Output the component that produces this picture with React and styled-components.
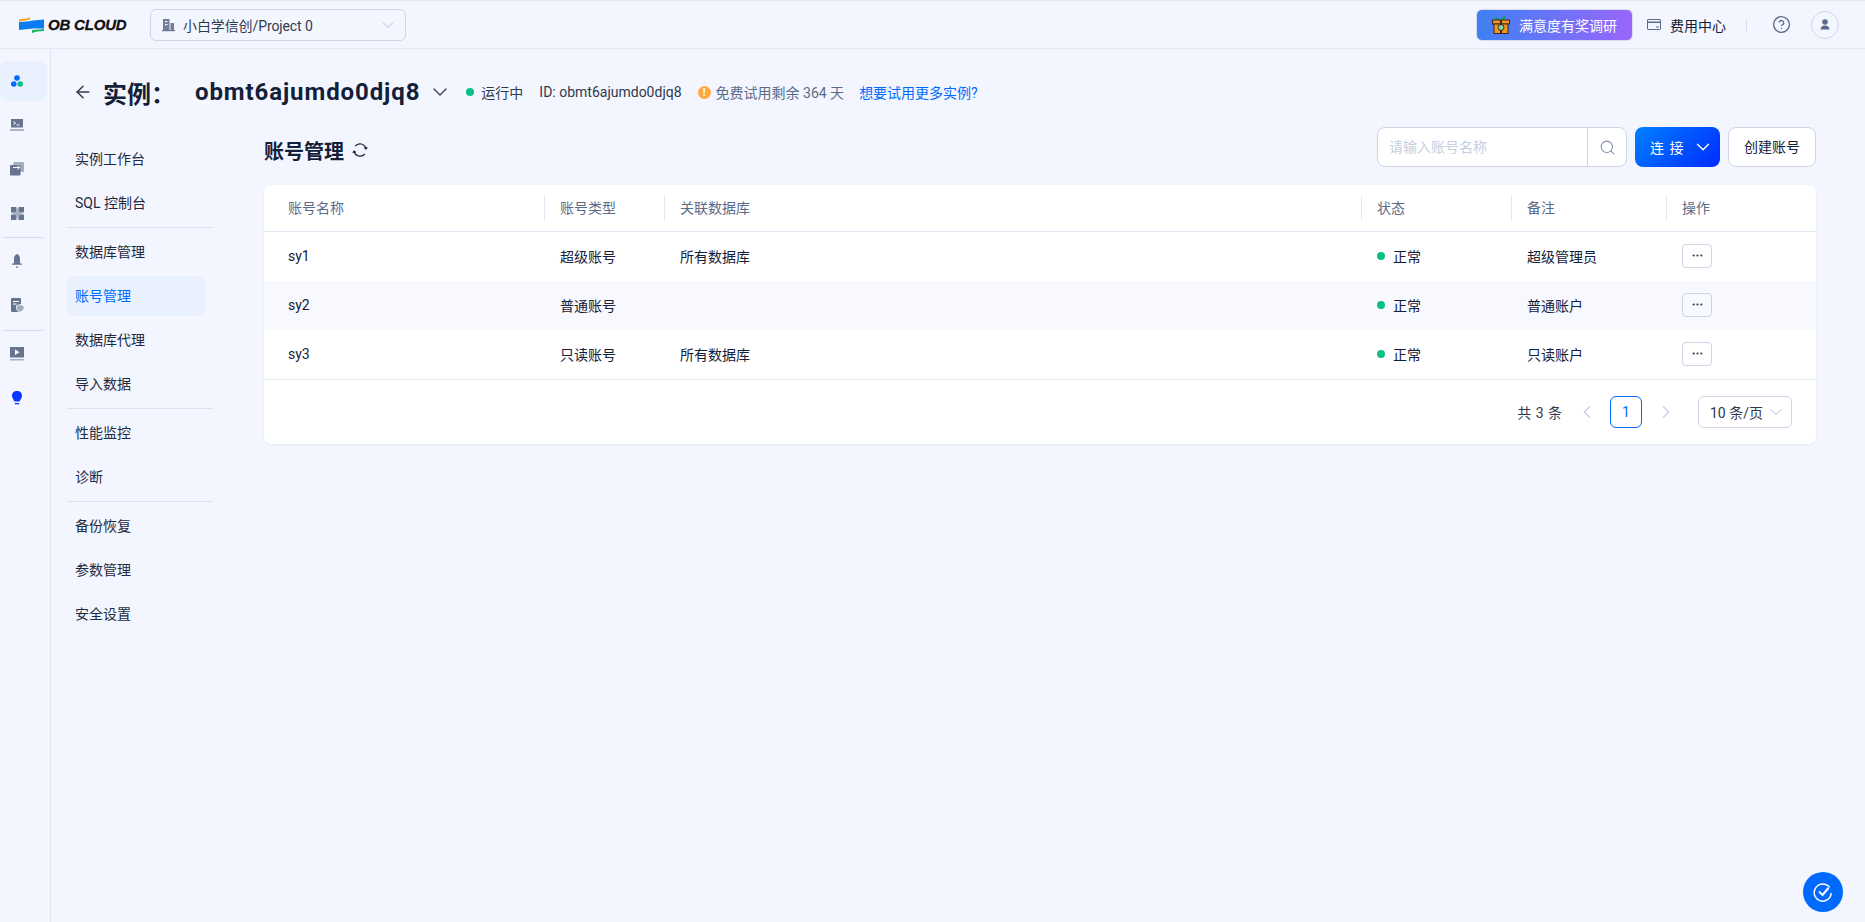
import React from 'react';
import styled, { createGlobalStyle } from 'styled-components';
import { ArrowLeft, ChevronDown, ChevronLeft, ChevronRight, CircleHelp, Ellipsis, Search } from 'lucide-react';

const GlobalStyle = createGlobalStyle`
    html, body {
        margin: 0;
        padding: 0;
        height: 100%;
        background: #f3f6fe;
        color: #132039;
        font-family: Roboto, "Noto Sans CJK SC", sans-serif;
        font-size: 14px;
        overflow: hidden;
    }
    * { box-sizing: border-box; }
`;

const Page = styled.div`
    width: 1865px;
    height: 922px;
    display: flex;
    flex-direction: column;
    position: relative;
    border-top: 1px solid #e6e7ec;
`;

const TopBar = styled.header`
    height: 48px;
    flex: none;
    display: flex;
    align-items: center;
    padding: 0 26px 0 19px;
    border-bottom: 1px solid #e2e7f3;
`;

const LogoWrap = styled.div`
    width: 131px;
    display: flex;
    align-items: center;
    gap: 4px;
`;

const LogoText = styled.span`
    font-family: "Liberation Sans", sans-serif;
    font-weight: 700;
    font-style: italic;
    font-size: 15px;
    letter-spacing: -0.2px;
    color: #111;
    white-space: nowrap;
    -webkit-text-stroke: 0.3px #111;
`;

const ProjectSelect = styled.div`
    width: 256px;
    height: 32px;
    display: flex;
    align-items: center;
    padding: 0 7px 0 11px;
    border: 1px solid #cdd5e4;
    border-radius: 6px;
    color: #303a4d;
    gap: 8px;
`;

const ProjectName = styled.span`
    flex: 1;
    white-space: nowrap;
    letter-spacing: -0.1px;
`;

const TopRight = styled.div`
    margin-left: auto;
    display: flex;
    align-items: center;
`;

const SurveyButton = styled.div`
    width: 157px;
    height: 32px;
    display: flex;
    align-items: center;
    padding-left: 15px;
    gap: 9px;
    border-radius: 6px;
    color: #fff;
    border: 1px solid #d8dcf0;
    background: linear-gradient(90deg, #3f80f3, #9a66fb);
`;

const CostLink = styled.div`
    margin-left: 14px;
    display: flex;
    align-items: center;
    gap: 9px;
    white-space: nowrap;
    color: #132039;
`;

const VLine = styled.span`
    width: 1px;
    height: 12px;
    background: #d5dbe8;
    margin: 0 25px 0 20px;
`;

const Avatar = styled.div`
    width: 28px;
    height: 28px;
    margin-left: 20px;
    border: 1px solid #cdd5e4;
    border-radius: 50%;
    display: flex;
    align-items: center;
    justify-content: center;
`;

const Body = styled.div`
    flex: 1;
    display: flex;
    min-height: 0;
`;

const Rail = styled.nav`
    width: 51px;
    flex: none;
    padding-top: 12px;
    border-right: 1px solid #dfe4f0;
    display: flex;
    flex-direction: column;
    align-items: flex-start;
`;

const RailItem = styled.div`
    width: 47px;
    height: 40px;
    margin-bottom: 4px;
    padding-right: 13px;
    border-radius: 8px;
    display: flex;
    align-items: center;
    justify-content: center;
    background: ${p => (p.$active ? '#e9f0fe' : 'transparent')};
`;

const RailLine = styled.div`
    width: 40px;
    height: 1px;
    background: #d5dcec;
    margin: ${p => p.$top || 0}px 0 3px 3px;
`;

const Main = styled.main`
    flex: 1;
    min-width: 0;
    padding: 19px 49px 0 16px;
`;

const TitleRow = styled.div`
    height: 48px;
    padding-left: 6px;
    display: flex;
    align-items: center;
    white-space: nowrap;
`;

const TitleLabel = styled.h1`
    margin: 0 0 0 10px;
    width: 92px;
    font-size: 24px;
    font-weight: 700;
    color: #132039;
`;

const InstanceName = styled.span`
    font-size: 24px;
    font-weight: 700;
    letter-spacing: 0.9px;
    color: #132039;
`;

const InstanceChevron = styled(ChevronDown)`
    margin-left: 8px;
`;

const StatusDot = styled.span`
    width: 8px;
    height: 8px;
    flex: none;
    margin-left: ${p => p.$left || 0}px;
    border-radius: 50%;
    background: #0ac185;
`;

const MetaText = styled.span`
    margin-left: ${p => p.$left || 0}px;
    color: ${p => p.$color || '#303a4d'};
`;

const WarnBadge = styled.span`
    width: 13px;
    height: 13px;
    margin-left: 16px;
    margin-right: 5px;
    border-radius: 50%;
    background: #ffa940;
    color: #fff;
    font-size: 10px;
    font-weight: 700;
    line-height: 13px;
    text-align: center;
`;

const Columns = styled.div`
    display: flex;
    margin-top: 2px;
`;

const SideNav = styled.div`
    width: 197px;
    flex: none;
    padding-top: 21px;
`;

const NavItem = styled.div`
    width: 138px;
    height: 40px;
    margin-bottom: 4px;
    padding-left: 8px;
    line-height: 40px;
    border-radius: 8px;
    color: ${p => (p.$active ? '#006aff' : '#1f2a3f')};
    background: ${p => (p.$active ? '#e9f0fe' : 'transparent')};
`;

const NavLine = styled.div`
    width: 146px;
    height: 1px;
    background: #dce1ef;
    margin-bottom: 4px;
`;

const Content = styled.section`
    flex: 1;
    min-width: 0;
`;

const ContentHead = styled.div`
    height: 40px;
    margin-top: 9px;
    margin-bottom: 18px;
    display: flex;
    align-items: center;
`;

const TitleGroup = styled.div`
    padding-top: 6px;
    display: flex;
    align-items: center;
    gap: 8px;
`;

const SectionTitle = styled.h2`
    margin: 0;
    font-size: 20px;
    font-weight: 700;
    color: #132039;
`;

const SearchBox = styled.div`
    margin-left: auto;
    width: 250px;
    height: 40px;
    display: flex;
    background: #fff;
    border: 1px solid #cdd5e4;
    border-radius: 8px;
    overflow: hidden;
`;

const SearchInput = styled.div`
    flex: 1;
    padding-left: 11px;
    line-height: 38px;
    color: #c5cfe0;
`;

const SearchButton = styled.div`
    width: 39px;
    border-left: 1px solid #cdd5e4;
    display: flex;
    align-items: center;
    justify-content: center;
`;

const ConnectButton = styled.div`
    width: 85px;
    height: 40px;
    margin-left: 8px;
    padding: 0 6px 0 15px;
    display: flex;
    align-items: center;
    justify-content: space-between;
    border-radius: 8px;
    color: #fff;
    word-spacing: 2px;
    background: linear-gradient(135deg, #0080ff, #002bff);
`;

const GhostButton = styled.div`
    width: 88px;
    height: 40px;
    margin-left: 8px;
    line-height: 38px;
    text-align: center;
    background: #fff;
    border: 1px solid #cdd5e4;
    border-radius: 8px;
    color: #132039;
`;

const Card = styled.div`
    background: #fff;
    border-radius: 8px;
    box-shadow: 0 1px 3px rgba(50, 70, 120, 0.06);
`;

const TableGrid = `
    display: grid;
    grid-template-columns: 280px 120px 697px 150px 155px 150px;
`;

const HeadRow = styled.div`
    ${TableGrid}
    height: 47px;
    align-items: center;
    border-bottom: 1px solid #e2e7f3;
    color: #5c6b8a;
`;

const HeadCell = styled.div`
    height: 24px;
    line-height: 24px;
    border-left: ${p => (p.$first ? 'none' : '1px solid #e2e7f3')};
    padding-left: ${p => (p.$first ? 24 : 15)}px;
`;

const Row = styled.div`
    ${TableGrid}
    height: 49px;
    padding-bottom: 2px;
    align-items: center;
    color: #132039;
    background: ${p => (p.$striped ? '#f8f9fe' : '#fff')};
`;

const Cell = styled.div`
    padding-left: ${p => (p.$first ? 24 : 16)}px;
    display: flex;
    align-items: center;
    gap: 8px;
`;

const MoreButton = styled.div`
    width: 30px;
    height: 24px;
    display: flex;
    align-items: center;
    justify-content: center;
    border: 1px solid #cdd5e4;
    border-radius: 4px;
`;

const Pager = styled.div`
    height: 65px;
    border-top: 1px solid #e2e7f3;
    display: flex;
    align-items: center;
    justify-content: flex-end;
    padding-right: 24px;
    color: #303a4d;
`;

const PagerTotal = styled.span`
    margin-right: 14px;
    word-spacing: 1px;
`;

const PageNumber = styled.div`
    width: 32px;
    height: 32px;
    margin: 0 13px 0 12px;
    border: 1px solid #006aff;
    border-radius: 6px;
    color: #006aff;
    line-height: 30px;
    text-align: center;
`;

const PageSize = styled.div`
    width: 94px;
    height: 32px;
    margin-left: 21px;
    padding: 0 5px 0 11px;
    border: 1px solid #cdd5e4;
    border-radius: 6px;
    display: flex;
    align-items: center;
    justify-content: space-between;
`;

const FloatButton = styled.div`
    position: absolute;
    right: 22px;
    bottom: 10px;
    width: 40px;
    height: 40px;
    border-radius: 50%;
    background: #006aff;
    display: flex;
    align-items: center;
    justify-content: center;
`;

const Logo = () => (
    <svg width="25" height="16" viewBox="0 0 25 16">
        <path d="M0 2 L8 1.5 L11 0 L11 2.5 L7 3.5 L0 4.5 Z" fill="#f5a623" />
        <path d="M0 5 L8 4.5 L14 3.5 L25 2.5 L25 11.5 L14 11.5 L0 13 Z" fill="#0b7bf0" />
        <path d="M13 13 L20 12.5 L25 12 L25 14 L18 14.5 L13 16 Z" fill="#19b45c" />
    </svg>
);

const Gift = () => (
    <svg width="18" height="19" viewBox="0 0 18 19">
        <path d="M8 5 C6 2 4 2 3 2 C3 4 5 5 8 5Z" fill="#0fa05a" />
        <path d="M9 5 C10 2 12 1 14 1 C14 3 12 5 9 5Z" fill="#0fa05a" />
        <rect x="0.5" y="5" width="17" height="4" fill="#f7941d" stroke="#3a2a1a" />
        <rect x="2" y="9" width="14" height="9.5" fill="#f7941d" stroke="#3a2a1a" />
        <rect x="8" y="5" width="2" height="13" fill="#3a2a1a" />
        <circle cx="9" cy="12.5" r="3" fill="#7fd1a8" stroke="#3a2a1a" />
    </svg>
);

const Building = () => (
    <svg width="13" height="14" viewBox="0 0 13 14" fill="#6b7793">
        <path d="M1 1 H7.5 V12 H1Z M8.5 5 H12 V12 H8.5Z" fillOpacity="0.95" />
        <rect x="0" y="12" width="13" height="1.2" />
        <rect x="3" y="3" width="2.5" height="1.2" fill="#f3f6fe" />
        <rect x="3" y="6" width="2.5" height="1.2" fill="#f3f6fe" />
    </svg>
);

const BillIcon = () => (
    <svg width="14" height="11" viewBox="0 0 14 11" fill="none" stroke="#5c6b8a">
        <rect x="0.5" y="0.5" width="13" height="10" rx="0.5" />
        <rect x="1" y="2.5" width="12" height="1.5" fill="#5c6b8a" stroke="none" />
        <path d="M9 8 H12" />
    </svg>
);

const PersonIcon = () => (
    <svg width="10" height="11" viewBox="0 0 10 11" fill="#5c6b8a">
        <circle cx="5" cy="3" r="2.8" />
        <path d="M0.5 10.5 C0.5 7.5 2.5 6.4 5 6.4 C7.5 6.4 9.5 7.5 9.5 10.5Z" />
    </svg>
);

const ReloadIcon = () => (
    <svg width="16" height="16" viewBox="0 0 16 16" fill="none" stroke="#132039" strokeWidth="1.2">
        <path d="M13.8 6.5 A6 6 0 0 0 3.2 4.2" />
        <path d="M2.2 9.5 A6 6 0 0 0 12.8 11.8" />
        <path d="M12.2 5.6 L13.9 7 L15.2 5.2" />
        <path d="M3.8 10.4 L2.1 9 L0.8 10.8" />
    </svg>
);

const RAIL_FILL = '#67748f';

const InstancesIcon = () => (
    <svg width="12" height="12" viewBox="0 0 12 12">
        <circle cx="6" cy="3" r="2.8" fill="#006aff" />
        <circle cx="2.8" cy="9" r="2.8" fill="#006aff" />
        <circle cx="9.2" cy="9" r="2.8" fill="#0ac185" />
    </svg>
);

const TerminalIcon = () => (
    <svg width="14" height="12" viewBox="0 0 14 12">
        <rect x="1" y="0" width="12" height="8.5" fill={RAIL_FILL} />
        <path d="M3.5 2.5 L5.5 4 L3.5 5.5" stroke="#fff" fill="none" />
        <path d="M6.5 6 H9.5" stroke="#fff" />
        <rect x="0" y="10.5" width="14" height="1" fill={RAIL_FILL} />
    </svg>
);

const MigrateIcon = () => (
    <svg width="14" height="14" viewBox="0 0 14 14">
        <rect x="3.5" y="0" width="10.5" height="10" rx="1" fill="#a4adc0" />
        <rect x="0" y="3" width="10.5" height="10.5" rx="1" fill={RAIL_FILL} />
        <path d="M3 5.5 H9.5 M7.5 3.5 L9.7 5.5 L7.5 7.5" stroke="#fff" fill="none" />
    </svg>
);

const GridIcon = () => (
    <svg width="13" height="13" viewBox="0 0 13 13" fill={RAIL_FILL}>
        <path d="M0 0 H5.5 V5.5 H0Z M7.5 0 H13 V5.5 H7.5Z M0 7.5 H5.5 V13 H0Z M7.5 7.5 H13 V13 H7.5Z" />
        <path d="M5.5 1.5 H7.5 V11.5 H5.5Z M1.5 5.5 H11.5 V7.5 H1.5Z" fill="#a4adc0" />
    </svg>
);

const BellIcon = () => (
    <svg width="10" height="14" viewBox="0 0 10 14" fill={RAIL_FILL}>
        <path d="M5 0 C7.2 0.8 8 3 8 5 V9.5 H10 V10.8 H0 V9.5 H2 V5 C2 3 2.8 0.8 5 0Z" />
        <rect x="4" y="12.5" width="2" height="1.2" />
    </svg>
);

const AuditIcon = () => (
    <svg width="13" height="14" viewBox="0 0 13 14">
        <rect x="0" y="0" width="10" height="14" rx="1" fill={RAIL_FILL} />
        <path d="M2 3.5 H8 M2 6 H5.5" stroke="#fff" />
        <path d="M9 6.5 L13 7.7 V10.5 C13 12 11 13.5 9 14 C7 13.5 5.5 12 5.5 10.5 V7.7Z" fill="#a4adc0" stroke="#fff" strokeWidth="0.8" />
    </svg>
);

const PlayIcon = () => (
    <svg width="14" height="14" viewBox="0 0 14 14">
        <rect x="0" y="0" width="14" height="10.5" fill={RAIL_FILL} />
        <path d="M5 2.5 L9.5 5.2 L5 8Z" fill="#fff" />
        <rect x="0" y="12" width="14" height="1.5" fill="#a4adc0" />
    </svg>
);

const BulbIcon = () => (
    <svg width="10" height="14" viewBox="0 0 10 14" fill="#0a36ff">
        <path d="M5 0 C8 0 10 2 10 4.8 C10 7 8.5 8.3 7.5 10.5 H2.5 C1.5 8.3 0 7 0 4.8 C0 2 2 0 5 0Z" />
        <rect x="2.8" y="12" width="4.4" height="1.3" />
    </svg>
);

const CheckBadge = () => (
    <svg width="20" height="20" viewBox="0 0 20 20" fill="none" stroke="#fff" strokeWidth="1.5">
        <path d="M16.5 5.5 A8.5 8.5 0 1 0 18.2 11" />
        <path d="M6 9.5 L9.5 13 L15.5 6" strokeWidth="2" />
    </svg>
);

const RAIL_GROUPS = [
    [<InstancesIcon />, <TerminalIcon />, <MigrateIcon />, <GridIcon />],
    [<BellIcon />, <AuditIcon />],
    [<PlayIcon />, <BulbIcon />]
];

const NAV_GROUPS = [
    ['实例工作台', 'SQL 控制台'],
    ['数据库管理', '账号管理', '数据库代理', '导入数据'],
    ['性能监控', '诊断'],
    ['备份恢复', '参数管理', '安全设置']
];

const COLUMNS = ['账号名称', '账号类型', '关联数据库', '状态', '备注', '操作'];

const ACCOUNTS = [
    { name: 'sy1', type: '超级账号', db: '所有数据库', note: '超级管理员' },
    { name: 'sy2', type: '普通账号', db: '', note: '普通账户' },
    { name: 'sy3', type: '只读账号', db: '所有数据库', note: '只读账户' }
];

export default function App() {
    return (
        <Page>
            <GlobalStyle />
            <TopBar>
                <LogoWrap>
                    <Logo />
                    <LogoText>OB CLOUD</LogoText>
                </LogoWrap>
                <ProjectSelect>
                    <Building />
                    <ProjectName>小白学信创/Project 0</ProjectName>
                    <ChevronDown size={20} strokeWidth={1.25} color="#c5cfe0" />
                </ProjectSelect>
                <TopRight>
                    <SurveyButton>
                        <Gift />
                        满意度有奖调研
                    </SurveyButton>
                    <CostLink>
                        <BillIcon />
                        费用中心
                    </CostLink>
                    <VLine />
                    <CircleHelp size={19} strokeWidth={1.75} color="#5c6b8a" />
                    <Avatar>
                        <PersonIcon />
                    </Avatar>
                </TopRight>
            </TopBar>
            <Body>
                <Rail>
                    {RAIL_GROUPS.map((group, g) => (
                        <React.Fragment key={g}>
                            {g > 0 && <RailLine $top={g === 2 ? 1 : 0} />}
                            {group.map((icon, i) => (
                                <RailItem key={i} $active={g === 0 && i === 0}>{icon}</RailItem>
                            ))}
                        </React.Fragment>
                    ))}
                </Rail>
                <Main>
                    <TitleRow>
                        <ArrowLeft size={20} strokeWidth={1.75} color="#303a4d" />
                        <TitleLabel>实例：</TitleLabel>
                        <InstanceName>obmt6ajumdo0djq8</InstanceName>
                        <InstanceChevron size={24} strokeWidth={1.25} color="#303a4d" />
                        <StatusDot $left={14} />
                        <MetaText $left={7}>运行中</MetaText>
                        <MetaText $left={16}>ID: obmt6ajumdo0djq8</MetaText>
                        <WarnBadge>!</WarnBadge>
                        <MetaText $color="#5c6b8a">免费试用剩余 364 天</MetaText>
                        <MetaText $left={15} $color="#006aff">想要试用更多实例?</MetaText>
                    </TitleRow>
                    <Columns>
                        <SideNav>
                            {NAV_GROUPS.map((group, g) => (
                                <React.Fragment key={g}>
                                    {g > 0 && <NavLine />}
                                    {group.map(label => (
                                        <NavItem key={label} $active={label === '账号管理'}>{label}</NavItem>
                                    ))}
                                </React.Fragment>
                            ))}
                        </SideNav>
                        <Content>
                            <ContentHead>
                                <TitleGroup>
                                    <SectionTitle>账号管理</SectionTitle>
                                    <ReloadIcon />
                                </TitleGroup>
                                <SearchBox>
                                    <SearchInput>请输入账号名称</SearchInput>
                                    <SearchButton>
                                        <Search size={17} strokeWidth={1.5} color="#8592ad" />
                                    </SearchButton>
                                </SearchBox>
                                <ConnectButton>
                                    连 接
                                    <ChevronDown size={22} strokeWidth={1.5} color="#fff" />
                                </ConnectButton>
                                <GhostButton>创建账号</GhostButton>
                            </ContentHead>
                            <Card>
                                <HeadRow>
                                    {COLUMNS.map((col, i) => (
                                        <HeadCell key={col} $first={i === 0}>{col}</HeadCell>
                                    ))}
                                </HeadRow>
                                {ACCOUNTS.map((acc, i) => (
                                    <Row key={acc.name} $striped={i === 1}>
                                        <Cell $first>{acc.name}</Cell>
                                        <Cell>{acc.type}</Cell>
                                        <Cell>{acc.db}</Cell>
                                        <Cell><StatusDot />正常</Cell>
                                        <Cell>{acc.note}</Cell>
                                        <Cell>
                                            <MoreButton>
                                                <Ellipsis size={13} color="#303a4d" />
                                            </MoreButton>
                                        </Cell>
                                    </Row>
                                ))}
                                <Pager>
                                    <PagerTotal>共 3 条</PagerTotal>
                                    <ChevronLeft size={22} strokeWidth={1.25} color="#c5cfe0" />
                                    <PageNumber>1</PageNumber>
                                    <ChevronRight size={22} strokeWidth={1.25} color="#c5cfe0" />
                                    <PageSize>
                                        10 条/页
                                        <ChevronDown size={20} strokeWidth={1.25} color="#c5cfe0" />
                                    </PageSize>
                                </Pager>
                            </Card>
                        </Content>
                    </Columns>
                </Main>
            </Body>
            <FloatButton><CheckBadge /></FloatButton>
        </Page>
    );
}
